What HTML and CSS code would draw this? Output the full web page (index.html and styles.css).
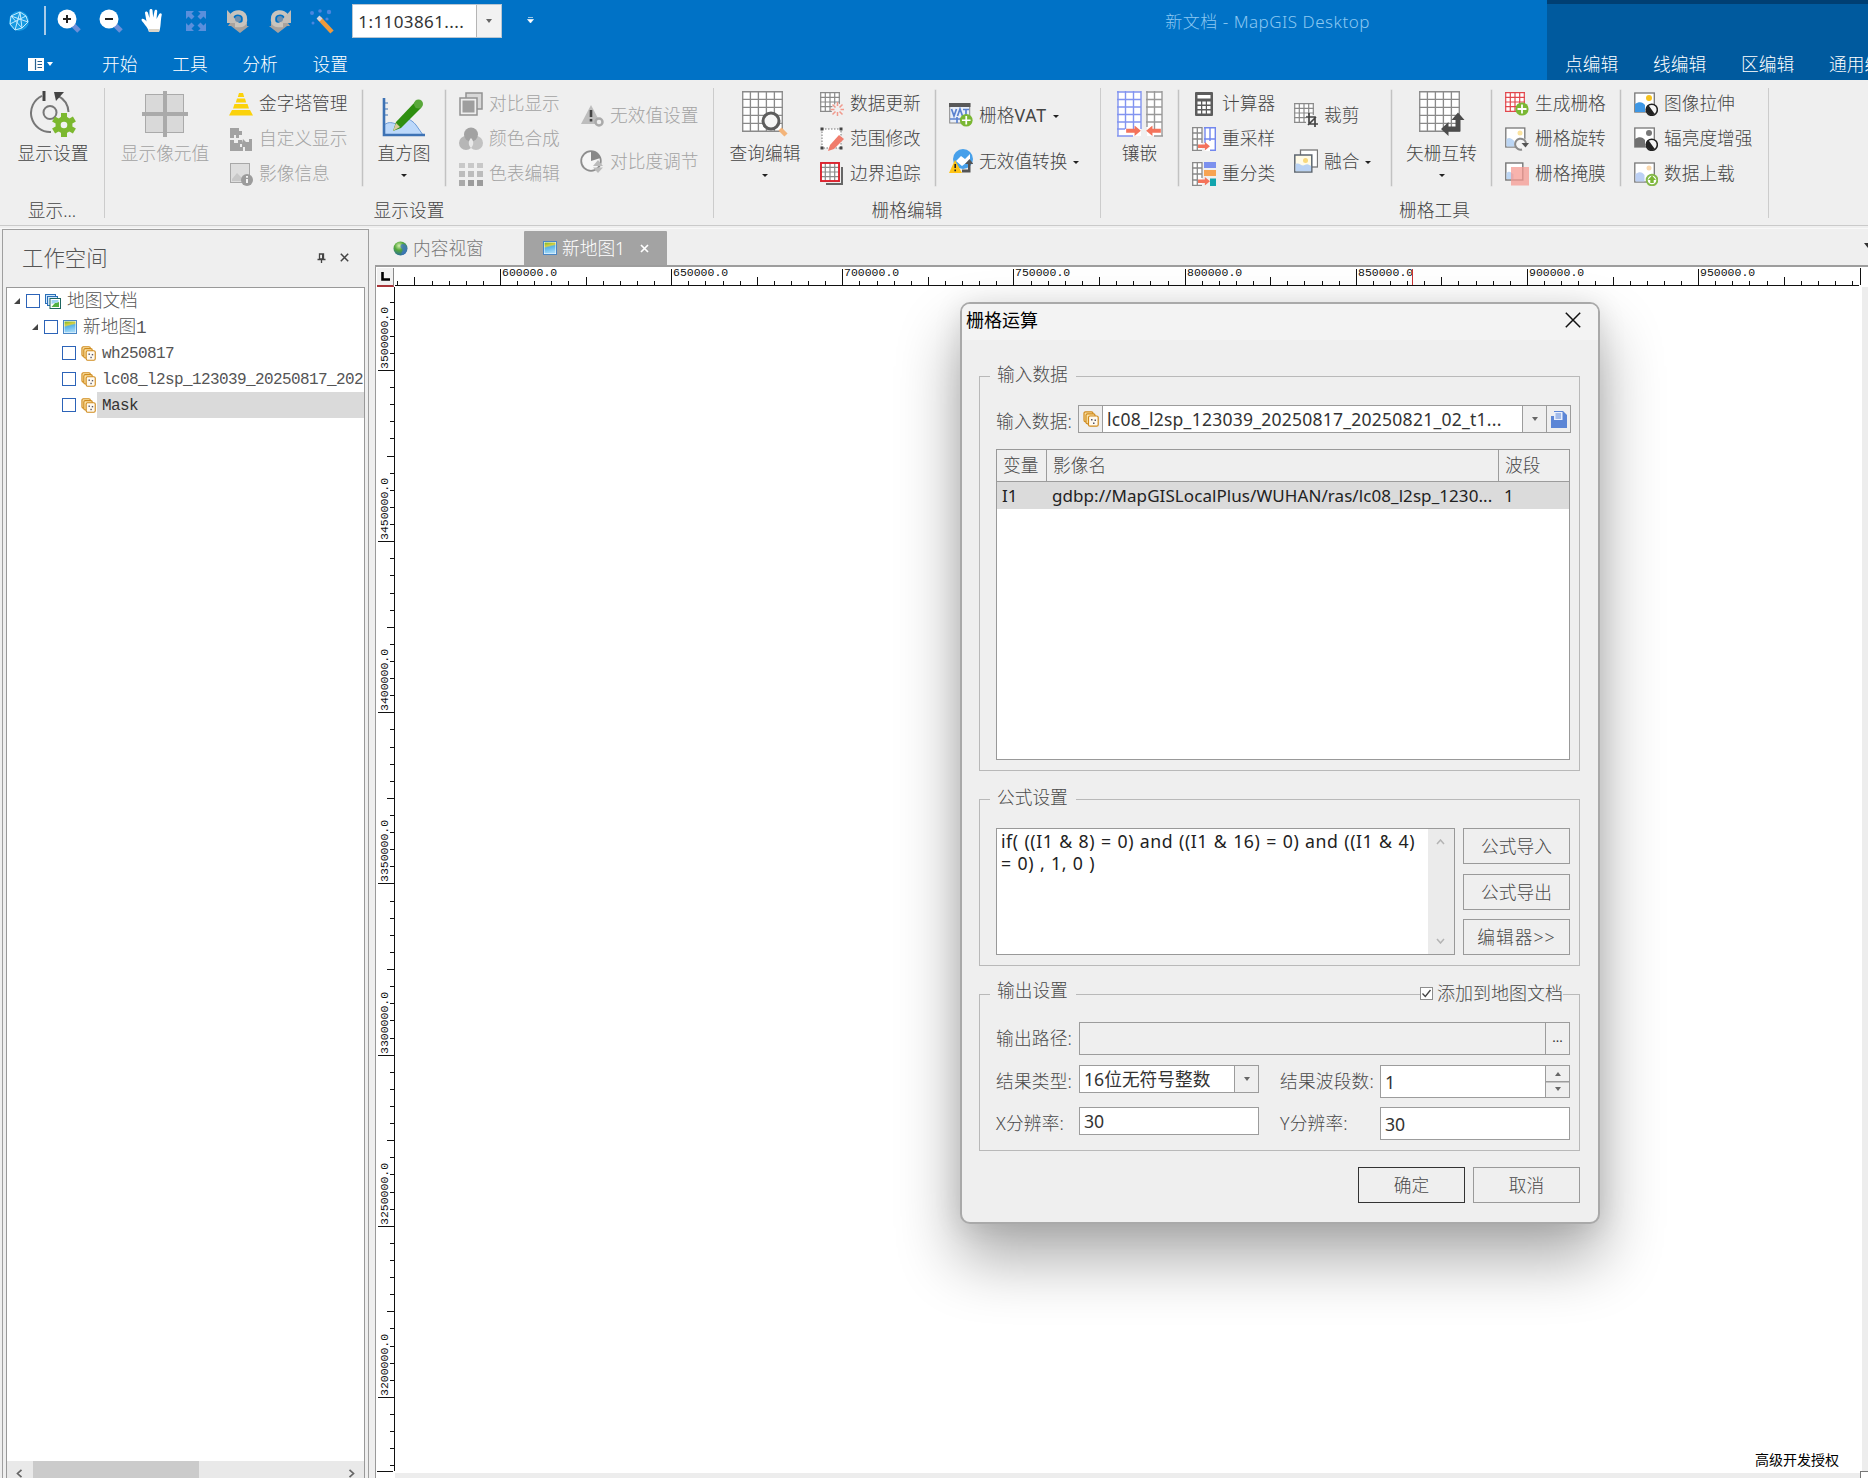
FILE: index.html
```html
<!DOCTYPE html>
<html lang="zh-CN">
<head>
<meta charset="utf-8">
<title>新文档 - MapGIS Desktop</title>
<link rel="stylesheet" href="styles.css">
</head>
<body>
<svg class="defs" aria-hidden="true">
  <defs>
    <linearGradient id="gMap" x1="0" y1="0" x2=".25" y2="1"><stop offset="0" stop-color="#6fb52e"/><stop offset=".35" stop-color="#d9cf3e"/><stop offset=".5" stop-color="#57b4e8"/><stop offset="1" stop-color="#9fd6f6"/></linearGradient>
    <radialGradient id="gGlobe" cx=".4" cy=".3" r=".8"><stop offset="0" stop-color="#d4efb0"/><stop offset=".4" stop-color="#55a83a"/><stop offset="1" stop-color="#1f5fb0"/></radialGradient>
    <symbol id="raster" viewBox="0 0 16 16"><g fill="#fbe3a8" stroke="#cf8a1c" stroke-width="1.200"><rect x="1" y=".8" width="9" height="10" rx="1.500"/><rect x="3" y="2.800" width="9" height="10" rx="1.500"/><rect x="5.500" y="5" width="9.700" height="10.200" rx="1.500" fill="#fffaf0"/></g><g fill="#556"><rect x="8" y="8" width="1.500" height="1.500"/><rect x="11.500" y="8.500" width="1.500" height="1.500"/><rect x="10" y="11.500" width="1.500" height="1.500"/></g></symbol>
    <symbol id="map" viewBox="0 0 14 14"><rect x=".5" y=".5" width="13" height="13" fill="#fff" stroke="#4a86c4"/><rect x="1.500" y="1.500" width="11" height="11" fill="url(#gMap)"/></symbol>
    <symbol id="maps" viewBox="0 0 16 15"><g fill="#cfe7fb" stroke="#2b6fb8"><rect x=".5" y=".5" width="10" height="9"/><rect x="2.500" y="2.500" width="10" height="9"/></g><rect x="5" y="4.500" width="10.500" height="10" fill="#fff" stroke="#1d6560"/><path d="M6.500 13L10 9l4-1v5z" fill="#52b043"/><path d="M6.500 6h7v2l-7 2z" fill="#9fd3f2"/></symbol>
    <symbol id="grid5" viewBox="0 0 40 40"><rect x=".5" y=".5" width="39" height="39" fill="#fff"/><path d="M.7 0V40M8.200 0V40M16 0V40M23.800 0V40M31.600 0V40M39.300 0V40M0 .7H40M0 8.200H40M0 16H40M0 23.800H40M0 31.600H40M0 39.300H40" stroke="#8a8a8a" stroke-width="1.300" fill="none"/></symbol>
    <symbol id="grid4" viewBox="0 0 20 20"><rect width="20" height="20" fill="#fff"/><path d="M.7 0V20M5.300 0V20M10 0V20M14.700 0V20M19.300 0V20M0 .7H20M0 5.300H20M0 10H20M0 14.700H20M0 19.300H20" stroke="currentColor" stroke-width="1.200" fill="none"/></symbol>
    <symbol id="plus" viewBox="0 0 14 14"><circle cx="7" cy="7" r="6.600" fill="#7ab733"/><path d="M7 2.500v9M2.500 7h9" stroke="#fff" stroke-width="1.800"/></symbol>
    <symbol id="half" viewBox="0 0 14 14"><circle cx="7" cy="7" r="5.800" fill="#f4f4f4" stroke="#222" stroke-width="1.600"/><path d="M7 1.500A5.500 5.500 0 0 0 7 12.500z" fill="#222" transform="rotate(-35 7 7)"/></symbol>
    <symbol id="arrowR" viewBox="0 0 14 10"><path d="M0 3h8V0l6 5-6 5V7H0z" fill="#f4735b"/></symbol>
  </defs>
</svg>

<header class="titlebar">
  <div class="title-main">
    <div class="qat">
      <svg class="globe" width="22" height="24" viewBox="0 0 22 24"><circle cx="11" cy="12" r="10" fill="#169ae2"/><path d="M3 7l9-4 6 4 2 6-6 6-7 2-5-6zM3 7l11 12M12 3l-5 18M18 7L2 15M3 7l17 6M12 3l2 16" fill="none" stroke="#c2eaff" stroke-width="1"/></svg>
      <span class="qat-sep"></span>
      <span class="slot"><svg width="26" height="26" viewBox="0 0 26 26"><path d="M17 17l6 6" stroke="#6c8fd8" stroke-width="5"/><circle cx="11" cy="11" r="9.500" fill="#fff"/><path d="M11 7v8M7 11h8" stroke="#222" stroke-width="2"/></svg></span>
      <span class="slot"><svg width="26" height="26" viewBox="0 0 26 26"><path d="M17 17l6 6" stroke="#6c8fd8" stroke-width="5"/><circle cx="11" cy="11" r="9.500" fill="#fff"/><path d="M7 11h8" stroke="#222" stroke-width="2"/></svg></span>
      <span class="slot"><svg width="26" height="26" viewBox="0 0 26 26"><path d="M9 24C8 19 2 14 1.500 12c0-2 3-1.500 5 1.500L5 5c0-2 2.500-2 3 0l1.500 5L9.500 2.500c0-2 3-2 3 0l.7 7 1.300-6.500c.5-2 3-1.500 2.700.5L16.500 11l2.700-5c1-1.500 3-.7 2.500 1C20.500 12 21 20 19 24z" fill="#fff"/><path d="M9 24h10l.5-3h-11z" fill="#dcd5c8"/></svg></span>
      <span class="slot"><svg width="24" height="24" viewBox="0 0 24 24"><g fill="#5a8fdc"><path d="M2 2h8L7.500 4.500l3 3-3 3-3-3L2 10zM22 2v8l-2.500-2.500-3 3-3-3 3-3L14 2zM2 22v-8l2.500 2.500 3-3 3 3-3 3L10 22zM22 22h-8l2.500-2.500-3-3 3-3 3 3L22 14z"/></g></svg></span>
      <span class="slot"><svg width="24" height="26" viewBox="0 0 24 26"><path d="M4 15h17v3h2l-9 7-9-7h-3z" fill="#a9a39e"/><path d="M5 9c3-7 15-6 14 3 0 3-2 5-5 5H9" fill="none" stroke="#c9c4bd" stroke-width="4.500"/><path d="M1 2v13h12z" fill="#c3beb8"/><circle cx="12" cy="11" r="3" fill="#6d8fb0"/></svg></span>
      <span class="slot"><svg width="24" height="26" viewBox="0 0 24 26"><g transform="matrix(-1 0 0 1 24 0)"><path d="M4 15h17v3h2l-9 7-9-7h-3z" fill="#a9a39e"/><path d="M5 9c3-7 15-6 14 3 0 3-2 5-5 5H9" fill="none" stroke="#c9c4bd" stroke-width="4.500"/><path d="M1 2v13h12z" fill="#c3beb8"/><circle cx="12" cy="11" r="3" fill="#6d8fb0"/></g></svg></span>
      <span class="slot"><svg width="26" height="26" viewBox="0 0 26 26"><path d="M10 10L23 24" stroke="#ef9a3c" stroke-width="4.500"/><path d="M9 9l3 3" stroke="#cfd6e4" stroke-width="4"/><g fill="#4a86e0"><circle cx="3" cy="5" r="2"/><circle cx="11" cy="3" r="1.800"/><circle cx="20" cy="4" r="2.200"/><circle cx="18" cy="11" r="1.600"/><circle cx="4" cy="15" r="1.500"/></g></svg></span>
      <span class="scale"><span class="scale-text">1:1103861....</span><span class="scale-btn"><i class="tri"></i></span></span>
      <svg class="qat-more" width="7" height="7" viewBox="0 0 7 7"><path d="M1 .5h5M.5 2.500h6L3.500 6z" fill="#fff" stroke="#fff" stroke-width=".6"/></svg>
      <span class="window-title">新文档 - MapGIS Desktop</span>
    </div>
    <nav class="tabs">
      <span class="file"><svg width="16" height="13" viewBox="0 0 16 13"><rect width="16" height="13" fill="#fff"/><path d="M7.500 1v11M9.500 3.500h4.500M9.500 6.500h4.500M9.500 9.500h4.500" stroke="#27608f" stroke-width="1.200"/></svg><i class="tri white"></i></span>
      <span>开始</span><span>工具</span><span>分析</span><span>设置</span>
    </nav>
  </div>
  <nav class="context"><span>点编辑</span><span>线编辑</span><span>区编辑</span><span>通用编辑</span></nav>
</header>

<section class="ribbon">
  <div class="group g1">
    <div class="body">
      <div class="big w104"><svg width="46" height="46" viewBox="0 0 46 46"><path d="M12 4.800A19 19 0 0 0 21 41M28 4.800A19 19 0 0 1 38.500 21" fill="none" stroke="#777" stroke-width="2"/><path d="M14 0v10" stroke="#444" stroke-width="3"/><path d="M24 1h10l-8 9z" fill="#444"/><circle cx="20" cy="21.500" r="6.500" fill="none" stroke="#777" stroke-width="2"/><g transform="translate(34 34)"><g stroke="#7cb82f" stroke-width="6"><path d="M0-12V12M-10.400-6L10.400 6M-10.400 6L10.400-6"/></g><circle r="8.500" fill="#7cb82f"/><circle r="3.300" fill="#f2f2f2"/></g></svg><span>显示设置</span></div>
    </div>
    <div class="caption">显示...</div>
  </div>

  <div class="group">
    <div class="body">
      <div class="big off w120"><svg width="46" height="46" viewBox="0 0 46 46"><g fill="#d9d9d9" stroke="#aaa"><rect x="3.500" y="3.500" width="38" height="38"/></g><path d="M23 0v46M0 23h46" stroke="#aaa" stroke-width="4"/></svg><span>显示像元值</span></div>
      <div class="col w137 p4">
        <div class="item"><svg viewBox="0 0 24 24"><path d="M10 1h4l1.200 4H8.800zM8 6.500h8l1.200 4H6.800zM5.500 12h13l1.500 4.500H4zM3 18h18l3 5.500H0z" fill="#fbd20b"/></svg>金字塔管理</div>
        <div class="item off"><svg viewBox="0 0 24 24" fill="#a2a2a2"><path d="M1 1h9v3h3v4h-3v3H7V8H5v3H1z"/><path d="M1 13h4v3h4v-3h4v4h-2v3h3v4H1zM14 12l3 3h3v-3h3v12h-7v-4h-3v-4z"/></svg>自定义显示</div>
        <div class="item off"><svg viewBox="0 0 24 24"><rect x="1.500" y="1.500" width="19" height="19" fill="#dedede" stroke="#a8a8a8"/><path d="M3 17l5-6 5 5 3-3v6H3z" fill="#c8c8c8"/><circle cx="18" cy="18" r="6" fill="#9c9c9c"/><path d="M18 17v4M18 14v1.800" stroke="#fff" stroke-width="1.800"/></svg>影像信息</div>
      </div>
      <i class="sep"></i>
      <div class="big w82"><svg width="46" height="46" viewBox="0 0 46 46"><path d="M3 34c5-4 9-2 12-1 8-9 15-5 20 1l7 10H3z" fill="#bcd8fa" stroke="#6c9bd8"/><path d="M3 7v37h41" fill="none" stroke="#3d72b4" stroke-width="2.600"/><path d="M4 12h3M4 18h3M4 24h3" stroke="#3d72b4"/><path d="M34 11l6 6L20 37l-8 3 3-9z" fill="#2f8f10"/><circle cx="37.500" cy="13" r="4.500" fill="#59a83a"/><path d="M12 40l3-8 4 4z" fill="#d9c9a0"/></svg><span>直方图</span><i class="tri dark"></i></div>
      <i class="sep"></i>
      <div class="col w121 p13">
        <div class="item off"><svg viewBox="0 0 24 24"><rect x="7" y="1" width="16" height="16" fill="#d8d8d8" stroke="#929292" stroke-width="1.500"/><rect x="1" y="6" width="17" height="17" fill="#eee" stroke="#929292" stroke-width="1.500"/><rect x="3.500" y="8.500" width="12" height="12" fill="#9e9e9e"/></svg>对比显示</div>
        <div class="item off"><svg viewBox="0 0 24 24"><circle cx="7" cy="16" r="7" fill="#b6b6b6"/><circle cx="17" cy="16" r="7" fill="#c2c2c2"/><circle cx="12" cy="7.500" r="7" fill="#a2a2a2"/><path d="M12 11c3 3 3 7 0 10-3-3-3-7 0-10z" fill="#e8e8e8"/></svg>颜色合成</div>
        <div class="item off"><svg viewBox="0 0 24 24" fill="#c8c8c8"><path d="M0 1h6v5H0zM9 1h6v5H9zM18 1h6v5h-6z"/><path d="M0 9h6v6H0zM9 9h6v6H9zM18 9h6v6h-6z" fill="#bcbcbc"/><path d="M0 18h6v6H0z" fill="#aaa"/><path d="M9 18h6v6H9zM18 18h6v6h-6z" fill="#9c9c9c"/></svg>色表编辑</div>
      </div>
      <div class="col two w146 p13">
        <div class="item off"><svg viewBox="0 0 24 24"><path d="M11 2l10 19H1z" fill="#bdbdbd"/><path d="M11 7v7M11 16v2.500" stroke="#444" stroke-width="2.600"/><circle cx="19" cy="19" r="3.500" fill="#eee" stroke="#aaa" stroke-width="2.500"/></svg>无效值设置</div>
        <div class="item off"><svg viewBox="0 0 24 24"><circle cx="11" cy="12" r="9.800" fill="#f6f6f6" stroke="#8e8e8e" stroke-width="1.800"/><path d="M11 2a10 10 0 0 1 9.500 7L11 12z" fill="#888"/><path d="M13 17l5-6 5 6zM13 18.500h10l-5 5.500z" fill="#bbb"/></svg>对比度调节</div>
      </div>
    </div>
    <div class="caption">显示设置</div>
  </div>

  <div class="group">
    <div class="body">
      <div class="big w102"><svg width="46" height="46" viewBox="0 0 46 46"><use href="#grid5" x="0" y="0" width="41" height="41"/><circle cx="29" cy="30" r="8" fill="#f6f6f6" stroke="#5d5d5d" stroke-width="3"/><path d="M38 38l6 6" stroke="#f3b47a" stroke-width="4.500"/></svg><span>查询编辑</span><i class="tri dark"></i></div>
      <div class="col w119 p4">
        <div class="item"><svg viewBox="0 0 24 24" color="#8a8a8a"><use href="#grid4" width="20" height="20"/><circle cx="17.500" cy="17.500" r="6" fill="#f0f0f0"/><path d="M17.500 10v4M17.500 20v4M10.500 17.500h4M20.500 17.500h4M12.500 12.500l3 3M22.500 12.500l-3 3M12.500 22.500l3-3M22.500 22.500l-3-3" stroke="#f19a8d" stroke-width="1.500"/></svg>数据更新</div>
        <div class="item"><svg viewBox="0 0 24 24"><rect x="2" y="2" width="19" height="19" fill="#fff" stroke="#777" stroke-dasharray="1.500 1.500"/><g fill="#444"><path d="M.5.500h3v3h-3zM19.500.500h3v3h-3zM.5 19.500h3v3h-3zM19.500 19.500h3v3h-3z"/></g><path d="M19 8l5 4-10 10-6 2 2-6z" fill="#f07c6c"/></svg>范围修改</div>
        <div class="item"><svg viewBox="0 0 24 24" color="#8a8a8a"><path d="M22 5v17H6" fill="none" stroke="#666" stroke-width="2"/><use href="#grid4" x="0" y="0" width="20" height="20"/><rect x="1" y="1" width="18" height="18" fill="none" stroke="#e11d2a" stroke-width="1.800"/></svg>边界追踪</div>
      </div>
      <i class="sep"></i>
      <div class="col two w164 p13">
        <div class="item"><svg viewBox="0 0 24 24"><rect x=".7" y="1" width="20" height="19" fill="#e9effa" stroke="#888"/><rect x="0" y="0" width="21.500" height="4" fill="#595959"/><path d="M2.500 6l2.500 7 2.500-7M8.500 13L11 6l2.500 7M14 6.500h6M17 6v7M1 16h14M8 14v6" fill="none" stroke="#5b82cf" stroke-width="1.700"/><use href="#plus" x="10.500" y="10.500" width="13.500" height="13.500"/></svg>栅格<em class="vat">VAT</em><i class="tri dark"></i></div>
        <div class="item"><svg viewBox="0 0 24 24"><circle cx="14" cy="10" r="10" fill="#47a0ea"/><path d="M7 12l5-5 4 3 5-5v6l-8 6z" fill="#fff"/><path d="M6 11l7 13H0z" fill="#ffc414"/><path d="M6.200 15v4M6.200 20.500v1.800" stroke="#222" stroke-width="1.600"/><path d="M13 20.500h6V15h-3l4.500-5 4 5h-3v8.500H13z" fill="#555"/></svg>无效值转换<i class="tri dark"></i></div>
      </div>
    </div>
    <div class="caption">栅格编辑</div>
  </div>

  <div class="group">
    <div class="body">
      <div class="big w77"><svg width="46" height="46" viewBox="0 0 46 46"><rect x="1" y="1" width="23" height="44" fill="#fff"/><path d="M1 0v45M8.500 0v38M16.500 0v38M24 0v38M0 1h24M0 8.500h24M0 16h24M0 23.500h24M0 31h24M0 38h8M0 45h16" stroke="#8294f0" stroke-width="1.400"/><rect x="30" y="1" width="15" height="44" fill="#fff"/><path d="M30 0v36M37.500 0v38M45 0v45M29 1h16M29 8.500h16M29 16h16M29 23.500h16M29 31h16M37 45h9" stroke="#999" stroke-width="1.400"/><use href="#arrowR" x="9" y="34.500" width="15" height="10.500"/><use href="#arrowR" transform="matrix(-1 0 0 1 44 34.500)" width="15" height="10.500"/></svg><span>镶嵌</span></div>
      <i class="sep"></i>
      <div class="col w102 p13">
        <div class="item"><svg viewBox="0 0 24 24"><rect x="3" y="0" width="18" height="24" rx="1" fill="#5c5c5c"/><path d="M5.500 3h13v3.500h-13zM5.500 9.500h3.500v3H5.500zM10.300 9.500h3.500v3h-3.500zM15 9.500h3.500v3H15zM5.500 14h3.500v3H5.500zM10.300 14h3.500v3h-3.500zM15 14h3.500v3H15zM5.500 18.500h3.500v3H5.500zM10.300 18.500h3.500v3h-3.500zM15 18.500h3.500v3H15z" fill="#fff"/></svg>计算器</div>
        <div class="item"><svg viewBox="0 0 24 24"><rect width="10" height="24" fill="#fff"/><path d="M.7 0v24M5.300 0v24M10 0v16M0 .7h10M0 6h10M0 12h10M0 18h6M0 23.300h10" stroke="#8a8a8a" stroke-width="1.300"/><rect x="12.500" width="11" height="24" fill="#fff"/><path d="M13 0v16M18 0v14M23.300 0v24M12 .7h12M12 12h12M18 23.300h6" stroke="#7287ee" stroke-width="1.400"/><use href="#arrowR" x="5" y="15" width="14" height="8.500"/></svg>重采样</div>
        <div class="item"><svg viewBox="0 0 24 24"><rect width="10" height="24" fill="#fff"/><path d="M.7 0v24M5.300 0v24M10 0v16M0 .7h10M0 6h10M0 12h10M0 18h6M0 23.300h10" stroke="#8a8a8a" stroke-width="1.300"/><path d="M12 0h12v6H12z" fill="#7b90ee"/><path d="M12 8h12v6H12z" fill="#f7a452"/><path d="M18 16.500h6V24h-6z" fill="#12a5ae"/><use href="#arrowR" x="5" y="15" width="14" height="8.500"/></svg>重分类</div>
      </div>
      <div class="col two w110 p13">
        <div class="item"><svg viewBox="0 0 24 24" color="#8a8a8a"><use href="#grid4" width="20" height="20"/><rect x="12" y="12" width="12" height="12" fill="#f0f0f0"/><path d="M15 10v11h9M12 14h9v10M14 22l8-8" fill="none" stroke="#444" stroke-width="1.700"/></svg>裁剪</div>
        <div class="item"><svg viewBox="0 0 24 24"><rect x="6.500" y="1" width="17" height="17" fill="#fff" stroke="#777" stroke-width="1.300"/><rect x=".8" y="6" width="17" height="17" fill="#fffbe8" stroke="#5d6670" stroke-width="1.500"/><path d="M1.600 15c4-2 6 3 9 1s5 0 6.500 1v5.300H1.600z" fill="#b9d2f3"/><circle cx="11.500" cy="11.500" r="2.500" fill="#f9d97c"/></svg>融合<i class="tri dark"></i></div>
      </div>
      <i class="sep"></i>
      <div class="big w99"><svg width="46" height="46" viewBox="0 0 46 46"><use href="#grid5" width="41" height="41"/><path d="M22 38l7.500-7v4.500h7V29h-4l6.500-7.500L45.500 29h-4v11.500h-12V45z" fill="#4c4c4c"/></svg><span>矢栅互转</span><i class="tri dark"></i></div>
      <i class="sep"></i>
      <div class="col w128 p13">
        <div class="item"><svg viewBox="0 0 24 24" color="#e2474d"><use href="#grid4" width="20" height="20"/><use href="#plus" x="10" y="10" width="14" height="14"/></svg>生成栅格</div>
        <div class="item"><svg viewBox="0 0 24 24"><rect x=".8" y="1" width="19" height="19" fill="#fff" stroke="#777" stroke-width="1.300"/><path d="M1.500 12c4-3 6 1 8 2v5.500h-8z" fill="#bcd6f4"/><circle cx="15" cy="6" r="2.500" fill="#fbe3a0"/><circle cx="16" cy="17" r="6.500" fill="#f4f4f4"/><path d="M17 22.500A5.500 5.500 0 1 1 21 16" fill="none" stroke="#8a8a8a" stroke-width="2"/><path d="M16.500 16h7.500l-3.500 4.500z" fill="#555"/></svg>栅格旋转</div>
        <div class="item"><svg viewBox="0 0 24 24"><rect x=".8" y="1" width="17" height="17" fill="#fff" stroke="#777" stroke-width="1.400"/><path d="M1.500 11c3-3 5 0 7 1v5h-7z" fill="#bcd6f4"/><rect x="6" y="5" width="18" height="18.500" fill="#f69a92" opacity=".75"/></svg>栅格掩膜</div>
      </div>
      <i class="sep"></i>
      <div class="col w147 p13">
        <div class="item"><svg viewBox="0 0 24 24"><rect x=".8" y="1" width="19.500" height="19" fill="#fff" stroke="#777" stroke-width="1.300"/><path d="M1 12c4-3 8-2 10 1v7H1z" fill="#3e97e4"/><circle cx="15" cy="6" r="3" fill="#f6c21d"/><use href="#half" x="11" y="11" width="13.500" height="13.500"/></svg>图像拉伸</div>
        <div class="item"><svg viewBox="0 0 24 24"><rect x=".8" y="1" width="19.500" height="19" fill="#fff" stroke="#777" stroke-width="1.300"/><path d="M1 12c4-3 8-2 10 1v7H1z" fill="#707070"/><circle cx="15" cy="6" r="3" fill="#777"/><use href="#half" x="11" y="11" width="13.500" height="13.500"/></svg>辐亮度增强</div>
        <div class="item"><svg viewBox="0 0 24 24"><rect x=".8" y="1" width="19.500" height="19" fill="#fff" stroke="#777" stroke-width="1.300"/><path d="M1.500 12c4-3 7-2 9 1v6.500h-9z" fill="#bcd0f4"/><circle cx="15" cy="6" r="2.500" fill="#fbd9ae"/><circle cx="18" cy="18" r="5.300" fill="#fff" stroke="#85b94a" stroke-width="2"/><path d="M18 13.500l4 4.500h-2.300v3h-3.400v-3H14z" fill="#7ab733"/></svg>数据上载</div>
      </div>
    </div>
    <div class="caption">栅格工具</div>
  </div>
</section>

<main class="workspace">
  <aside class="panel">
    <div class="panel-head"><h2>工作空间</h2>
      <svg width="9" height="10" viewBox="0 0 9 10"><path d="M2.500 1h4v5h-4zM.5 6.500h8M4.500 6.500V10" fill="none" stroke="#444" stroke-width="1.300"/><path d="M5 1h1.500v5H5z" fill="#444"/></svg>
      <svg width="9" height="9" viewBox="0 0 9 9"><path d="M.8.8l7.400 7.400M8.200.8L.8 8.200" stroke="#444" stroke-width="1.500"/></svg>
    </div>
    <div class="tree">
      <ul>
        <li class="l1"><i class="exp"></i><i class="chk"></i><svg width="16" height="15"><use href="#maps"/></svg><span>地图文档</span></li>
        <li class="l2"><i class="exp"></i><i class="chk"></i><svg width="14" height="14"><use href="#map"/></svg><span>新地图1</span></li>
        <li class="l3"><i class="chk"></i><svg width="15" height="15"><use href="#raster"/></svg><span>wh250817</span></li>
        <li class="l3"><i class="chk"></i><svg width="15" height="15"><use href="#raster"/></svg><span>lc08_l2sp_123039_20250817_202</span></li>
        <li class="l3 sel"><i class="chk"></i><svg width="15" height="15"><use href="#raster"/></svg><span>Mask</span></li>
      </ul>
      <div class="hscroll"><svg width="7" height="9" viewBox="0 0 7 9"><path d="M5.500.8L1.500 4.500l4 3.700" fill="none" stroke="#666" stroke-width="1.700"/></svg><i class="thumb"></i><svg width="7" height="9" viewBox="0 0 7 9"><path d="M1.500.8l4 3.700-4 3.700" fill="none" stroke="#666" stroke-width="1.700"/></svg></div>
    </div>
  </aside>

  <section class="docs">
    <div class="doc-tabs">
      <div class="doc-tab"><svg width="15" height="15" viewBox="0 0 15 15"><circle cx="7.500" cy="7.500" r="7" fill="url(#gGlobe)"/><path d="M9 3c3 0 5 2 5 5s-2 5-5 6c-2-2 2-4 0-6s-2-4 0-5z" fill="#3f74c4" opacity=".75"/></svg><span>内容视窗</span></div>
      <div class="doc-tab active"><svg width="14" height="14"><use href="#map"/></svg><span>新地图1</span><svg class="x" width="9" height="9" viewBox="0 0 9 9"><path d="M1 1l7 7M8 1L1 8" stroke="#fff" stroke-width="1.700"/></svg></div>
      <svg class="tabs-more" width="4" height="5" viewBox="0 0 4 5"><path d="M0 0h8L4 5z" fill="#333"/></svg>
    </div>
    <div class="view">
      <div class="corner"><svg width="9" height="9" viewBox="0 0 9 9"><path d="M1.500 0v7.500H9" fill="none" stroke="#000" stroke-width="2.600"/></svg></div>
      <svg class="hruler" id="hruler" width="1474" height="19"></svg>
      <svg class="vruler" id="vruler" width="19" height="1187"></svg>
      <div class="canvas"><span class="license">高级开发授权</span></div>
      <i class="grip"></i>
    </div>
  </section>
</main>

<div class="dialog">
  <div class="dlg-title"><span>栅格运算</span><svg width="16" height="16" viewBox="0 0 16 16"><path d="M.8.8l14.400 14.400M15.200.8L.8 15.200" stroke="#111" stroke-width="1.500"/></svg></div>
  <div class="dlg-body">
    <fieldset class="fs-input"><legend>输入数据</legend>
      <div class="row r-in"><label>输入数据:</label>
        <div class="combo in"><b class="ic"><svg width="16" height="16"><use href="#raster"/></svg></b><span class="val"><em class="t-file">lc08_l2sp_123039_20250817_20250821_02_t1...</em></span><b class="btn"><i class="tri"></i></b><b class="btn"><svg width="16" height="17" viewBox="0 0 16 17"><path d="M0 5h3V0h9l4 4v13H0z" fill="#5c86d6"/><path d="M3 1h8.500v8H3z" fill="#e8effc"/><path d="M4.500 3h5.500M4.500 5h5.500M4.500 7h5.500" stroke="#5c86d6"/></svg></b></div>
      </div>
      <div class="table">
        <div class="thead"><span>变量</span><span>影像名</span><span>波段</span></div>
        <div class="trow"><span>I1</span><span><em class="t-path">gdbp://MapGISLocalPlus/WUHAN/ras/lc08_l2sp_1230...</em></span><span>1</span></div>
      </div>
    </fieldset>
    <fieldset class="fs-formula"><legend>公式设置</legend>
      <div class="formula"><div class="text"><em>if( ((I1 &amp; 8) = 0) and ((I1 &amp; 16) = 0) and ((I1 &amp; 4)</em><em>= 0) , 1, 0 )</em></div><div class="vscroll"><svg width="9" height="6" viewBox="0 0 9 6"><path d="M1 5l3.500-4L8 5" fill="none" stroke="#b4b4b4" stroke-width="1.500"/></svg><svg width="9" height="6" viewBox="0 0 9 6"><path d="M1 1l3.500 4L8 1" fill="none" stroke="#b4b4b4" stroke-width="1.500"/></svg></div></div>
      <div class="fbtns"><button>公式导入</button><button>公式导出</button><button class="editor">编辑器&gt;&gt;</button></div>
    </fieldset>
    <fieldset class="fs-output"><legend>输出设置</legend>
      <div class="addmap"><i><svg width="11" height="11" viewBox="0 0 11 11"><path d="M1.500 5.500l2.800 3L9.500 2" fill="none" stroke="#444" stroke-width="1.300"/></svg></i>添加到地图文档</div>
      <div class="grid">
        <label>输出路径:</label><div class="combo path"><span class="val"></span><b class="btn">...</b></div>
        <label>结果类型:</label><div class="combo short"><span class="val">16位无符号整数</span><b class="btn"><i class="tri"></i></b></div>
        <label class="second">结果波段数:</label><div class="combo tall"><span class="val">1</span><b class="spin"><i class="tri up"></i><i class="tri"></i></b></div>
        <label>X分辨率:</label><div class="combo short"><span class="val">30</span></div>
        <label class="second">Y分辨率:</label><div class="combo tall"><span class="val">30</span></div>
      </div>
    </fieldset>
    <div class="actions"><button class="primary">确定</button><button>取消</button></div>
  </div>
</div>
<script src="rulers.js"></script>
</body>
</html>
```
FILE: styles.css
```css
* { box-sizing: border-box; }
html, body { margin: 0; height: 100%; overflow: hidden; }
body {
  display: flex; flex-direction: column;
  width: 1868px; height: 1478px;
  background: #efefef; color: #4a4a4a;
  font: 300 17.700px/24px "Noto Sans", "Noto Sans CJK SC", sans-serif;
}
.defs { position: absolute; width: 0; height: 0; }
svg { display: block; flex: none; }
span, label, .item, .caption { white-space: nowrap; }
em { font-style: normal; white-space: pre; }
.tri { flex: none; width: 0; height: 0; border: 3.500px solid transparent; border-top: 4px solid #666; border-bottom: 0; }
.tri.up { border-top: 0; border-bottom: 4px solid #666; }
.tri.white { border-top-color: #fff; border-width: 4px 3px 0; }
.tri.dark { border-top-color: #222; border-width: 3.500px 3px 0; }

/* title bar */
.titlebar { display: flex; height: 80px; flex: none; background: #0072c6; color: #fff; }
.title-main { width: 1547px; flex: none; }
.qat { display: flex; align-items: center; height: 41px; }
.globe { margin-left: 8px; }
.qat-sep { width: 2px; height: 29px; margin: 0 2px 0 14px; background: #a9cbe8; }
.slot { width: 42.200px; display: flex; justify-content: center; padding-top: 1px; }
.scale { display: flex; width: 150px; height: 34px; margin: 1px 0 0 9px; border: 1px solid #b9c6d2; background: #fff; color: #333; font-weight: 400; }
.scale-text { flex: 1; padding-left: 5px; line-height: 33px; font-size: 17px; letter-spacing: .4px; }
.scale-btn { width: 25px; display: flex; align-items: center; justify-content: center; border-left: 1px solid #b5b5b5; background: #f2f2f2; }
.qat-more { margin-left: 25px; }
.window-title { margin-left: 631px; padding-top: 2px; color: #8cc8f2; font-size: 17px; letter-spacing: .5px; }
.tabs { display: flex; align-items: center; height: 39px; padding-top: 7px; }
.tabs span { width: 70.200px; height: 24px; }
.tabs .file { display: flex; align-items: center; gap: 3px; width: 102px; padding-left: 28px; }
.context { flex: 1; display: flex; align-items: flex-end; padding: 0 0 4px 18px; border-top: 4px solid #003f73; background: #005a9e; overflow: hidden; }
.context span { flex: none; width: 88px; line-height: 24px; }

/* ribbon */
.ribbon { display: flex; flex: none; height: 149px; padding-top: 6px; border-bottom: 1px solid #f8f8f8; box-shadow: inset 0 -2px 0 #efefef, inset 0 -3px 0 #cacaca; color: #454545; }
.group { display: flex; flex-direction: column; background: linear-gradient(#ccc, #ccc) right 2px / 1px 130px no-repeat; padding-right: 1px; }
.body { display: flex; height: 105px; }
.caption { margin-top: 7px; text-align: center; }
.sep { width: 1px; height: 96px; margin-top: 4px; background: #c2c2c2; box-shadow: 0 0 0 .5px #dadada; }
.big { display: flex; flex-direction: column; align-items: center; padding-top: 5px; }
.big span { margin-top: 4px; }
.big .tri { margin-top: 9px; }
.g1 .big { padding-left: 2px; }
.item { display: flex; align-items: center; height: 35px; padding-bottom: 2px; }
.item svg { width: 24px; height: 24px; margin: 2px 6px 0 0; }
.item .tri { margin: 2px 0 0 6px; }
.vat { font-weight: 400; letter-spacing: 1px; }
.two { padding-top: 6px; }
.two .item { height: 46px; padding-bottom: 0; }
.two .item svg { margin-top: 0; }
.off { color: #a3a3a3; }
.p4 { padding-left: 4px; } .p13 { padding-left: 13px; }
.w77 { width: 77px; } .w82 { width: 82px; } .w99 { width: 99px; } .w102 { width: 102px; }
.w104 { width: 104px; } .w110 { width: 110px; } .w119 { width: 119px; } .w120 { width: 120px; }
.w121 { width: 121px; } .w128 { width: 128px; } .w137 { width: 137px; } .w146 { width: 146px; }
.w147 { width: 147px; } .w164 { width: 164px; }

/* workspace panel */
.workspace { display: flex; flex: 1; min-height: 0; }
.panel { display: flex; flex-direction: column; width: 367px; margin-left: 2px; flex: none; padding: 0 3px; border: 1px solid #9f9f9f; border-bottom: 0; }
.panel-head { display: flex; align-items: center; height: 57px; padding: 0 16px 2px; }
.panel-head h2 { flex: 1; margin: 0; font-size: 21.400px; font-weight: 300; color: #555; }
.panel-head svg + svg { margin-left: 14px; }
.tree { flex: 1; display: flex; flex-direction: column; border: 1px solid #999; border-bottom: 0; background: #fff; overflow: hidden; }
.tree ul { flex: 1; margin: 0; padding: 0; list-style: none; font-family: "Liberation Mono", "Noto Sans CJK SC", monospace; }
.tree li { display: flex; align-items: center; height: 26px; font-size: 16px; letter-spacing: -.6px; color: #555; }
.tree li span { flex: 1; height: 26px; line-height: 29px; padding-left: 5px; margin-left: 1px; overflow: hidden; }
.tree .l1 span, .tree .l2 span { font-size: 17.700px; line-height: 28px; letter-spacing: 0; }
.tree .l1 { padding-left: 7px; } .tree .l2 { padding-left: 25px; } .tree .l3 { padding-left: 55px; }
.tree .sel { color: #333; }
.tree .sel span { background: #dadada; }
.exp { width: 0; height: 0; margin-right: 6px; border-left: 6px solid transparent; border-bottom: 6px solid #444; }
.chk { width: 14px; height: 14px; margin-right: 5px; border: 1px solid #2c63b8; }
.hscroll { display: flex; align-items: center; height: 17px; padding: 0 9px; background: #e9e9e9; }
.hscroll svg { margin-top: 7px; }
.hscroll .thumb { width: 166px; height: 17px; margin: 0 auto 0 10px; background: #cbcbcb; }

/* documents */
.docs { flex: 1; display: flex; flex-direction: column; margin-left: 6px; min-width: 0; }
.doc-tabs { display: flex; height: 38px; flex: none; padding-top: 2px; border-bottom: 2px solid #9d9d9d; }
.doc-tab { display: flex; align-items: center; width: 149px; padding-left: 18px; gap: 5px; color: #777; }
.doc-tab.active { width: 143px; padding-left: 19px; gap: 5px; background: #a3a3a3; color: #fff; border-radius: 1px 1px 0 0; }
.doc-tab .x { margin-left: 10px; }
.tabs-more { margin: 12px 0 0 auto; }
.view { flex: 1; position: relative; display: grid; grid-template: 19px 1fr / 19px 1fr; min-height: 0; padding-top: 1px; border-left: 1px solid #9a9a9a; background: #fff; }
.corner { display: flex; align-items: center; justify-content: center; margin: 0 1px 0 1px; background: #f1f1f1; border-bottom: 2px solid #a93438; border-right: 1px solid #888; }
.hruler, .vruler { font: 400 11.500px "Liberation Mono", monospace; fill: #111; }
.canvas { display: flex; align-items: flex-end; justify-content: flex-end; padding: 0 23px 4px 0; border: solid #ededed; border-width: 0 7px 5px 0; }
.license { font: 400 14px/20px "Noto Sans CJK SC", sans-serif; color: #000; }
.grip { position: absolute; right: 0; bottom: 0; width: 8px; height: 7px; border: solid #777; border-width: 1px 0 0 1px; background: #fff; }

/* dialog window */
.dialog { position: absolute; left: 960px; top: 302px; width: 640px; height: 922px; border: 2px solid #a9a9a9; border-radius: 10px; background: #efefef; box-shadow: 0 34px 62px 2px rgba(0,0,0,.32), 0 2px 28px rgba(0,0,0,.1); }
.dlg-title { display: flex; align-items: center; justify-content: space-between; height: 36px; padding: 0 17px 4px 4px; border-radius: 8px 8px 0 0; background: #f3f3f3; color: #000; font-size: 18px; font-weight: 400; }
.dlg-body { padding: 24px 18px 0 17px; }
fieldset { margin: 0; padding: 0; border: 1px solid #b9b9b9; min-width: 0; }
legend { height: 24px; margin-left: -6px; padding: 0 8px 0 7px; line-height: 20px; }
.fs-input { height: 407px; margin-bottom: 16px; padding-left: 16px; }
.row { display: flex; align-items: center; }
label { width: 83px; flex: none; letter-spacing: .2px; }
.r-in { margin-top: 16px; height: 30px; }
.r-in label { padding-top: 3px; width: 82px; }
.combo { display: flex; border: 1px solid #9c9c9c; background: #fff; color: #333; font-weight: 400; }
.combo .val { flex: 1; display: flex; align-items: center; padding-left: 4px; overflow: hidden; }
.combo b { display: flex; align-items: center; justify-content: center; width: 24px; flex: none; background: #efefef; font-weight: 400; }
.combo .ic { border-right: 1px solid #9c9c9c; }
.combo .btn, .combo .spin { border-left: 1px solid #9c9c9c; }
.combo.in { width: 493px; height: 28px; }
.t-file { font-size: 17.500px; letter-spacing: .25px; }
.t-path { letter-spacing: .07px; }
.table { width: 574px; height: 311px; margin-top: 15px; border: 1px solid #999; background: #fff; }
.thead, .trow { display: grid; grid-template-columns: 49px 452px 1fr; }
.thead { height: 32px; background: #efefef; border-bottom: 1px solid #9c9c9c; line-height: 31px; }
.thead span { padding-left: 6px; }
.thead span + span { border-left: 1px solid #9c9c9c; }
.trow { height: 27px; background: #dbdbdb; color: #222; font-weight: 400; line-height: 27px; font-size: 17px; }
.trow span { padding-left: 5px; }
.trow span + span { padding-left: 6px; }
.fs-formula { display: grid; grid-template-columns: 459px 107px; column-gap: 8px; height: 179px; margin-bottom: 16px; padding: 17px 0 0 16px; align-items: start; }
.formula { display: flex; height: 127px; border: 1px solid #999; background: #fff; color: #222; font-weight: 400; }
.formula .text { flex: 1; display: flex; flex-direction: column; padding: 1px 0 0 4px; line-height: 22px; font-size: 17.700px; letter-spacing: .55px; word-spacing: .7px; }
.vscroll { display: flex; flex-direction: column; align-items: center; justify-content: space-between; width: 26px; padding: 10px 2px 10px 0; background: #ebebeb; }
button { display: flex; align-items: center; justify-content: center; height: 36px; width: 107px; padding: 0; border: 1px solid #9a9a9a; background: #efefef; font: inherit; color: inherit; }
.editor { letter-spacing: 1px; }
.fbtns { display: flex; flex-direction: column; gap: 9.500px; }
.fs-output { position: relative; height: 169px; padding-left: 16px; }
.fs-output legend { line-height: 17px; }
.addmap { position: absolute; right: 16px; top: -25px; display: flex; align-items: center; gap: 4px; background: #efefef; height: 24px; font-size: 18px; }
.addmap i { width: 13px; height: 13px; border: 1px solid #8e8e8e; background: #fff; }
.grid { display: grid; grid-template-columns: 83px 201px 100px 190px; row-gap: 9px; padding-top: 16px; }
.grid label { width: auto; line-height: 33px; height: 32px; }
.grid .path { grid-column: span 3; height: 33px; margin-bottom: 1px; background: #efefef; }
.grid .path .btn { font-size: 13px; padding-bottom: 4px; }
.grid .short { width: 180px; height: 28px; }
.grid .tall { height: 33px; }
.combo .spin { flex-direction: column; justify-content: space-around; background: linear-gradient(#9c9c9c, #9c9c9c) 0 50% / 100% 1.500px no-repeat #efefef; }
.actions { display: flex; justify-content: flex-end; gap: 8px; margin-top: 16px; }
.actions .primary { border-color: #333; }
```
FILE: rulers.js
```js
const NS = "http://www.w3.org/2000/svg";
const STEP = 17.116;

function add(svg, name, attrs, text) {
  const el = document.createElementNS(NS, name);
  for (const key in attrs) el.setAttribute(key, attrs[key]);
  if (text) el.textContent = text;
  svg.appendChild(el);
}

function label(value) {
  return value + ".0";
}

// Horizontal ruler: the 600000 mark is at 105px from the ruler's left edge.
const h = document.getElementById("hruler");
add(h, "rect", { x: 0, y: 17, width: 1464, height: 1 });
add(h, "rect", { x: 1465, y: 0, width: 1, height: 17 });
for (let k = -6; k <= 79; k++) {
  const x = Math.round(105 + k * STEP);
  const top = k % 10 === 0 ? 1 : k % 5 === 0 ? 9 : 13;
  add(h, "rect", { x: x, y: top, width: 1, height: 17 - top });
  if (k % 10 === 0) add(h, "text", { x: x + 2, y: 8 }, label(600000 + k * 5000));
}
add(h, "rect", { x: 1017, y: 1, width: 1, height: 16, fill: "#c33" });

// Vertical ruler: the 3500000 mark is at 83px from the ruler's top edge.
const v = document.getElementById("vruler");
add(v, "rect", { x: 18, y: 0, width: 1, height: 1184 });
add(v, "rect", { x: 1, y: 1184, width: 16, height: 1 });
for (let k = -4; k <= 64; k++) {
  const y = Math.round(83 + k * STEP);
  const len = k % 10 === 0 ? 16 : k % 5 === 0 ? 7 : 4;
  add(v, "rect", { x: 18 - len, y: y, width: len, height: 1 });
  if (k % 10 === 0) add(v, "text", { transform: `translate(12 ${y - 1}) rotate(-90)` }, label(3500000 - k * 5000));
}
```
